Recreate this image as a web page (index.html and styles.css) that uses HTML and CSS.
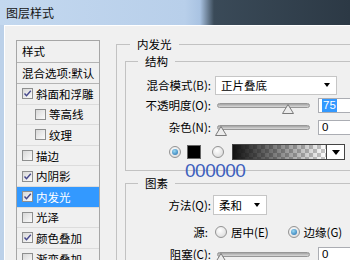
FILE: index.html
```html
<!DOCTYPE html>
<html lang="zh-CN">
<head>
  <meta charset="UTF-8">
  <title>图层样式</title>
  <link rel="stylesheet" href="styles.css">
</head>
<body>
  <div class="titlebar">图层样式</div>

  <div class="dialog">
    <!-- Effects list on the left -->
    <ul class="style-list">
      <li class="head">样式</li>
      <li class="head">混合选项:默认</li>
      <li><span class="check"><svg viewBox="0 0 9 9"><path d="M1.5 4.5l2 2.3L7.8 1.8"/></svg></span>斜面和浮雕</li>
      <li class="sub"><span class="check"></span>等高线</li>
      <li class="sub"><span class="check"></span>纹理</li>
      <li><span class="check"></span>描边</li>
      <li><span class="check"><svg viewBox="0 0 9 9"><path d="M1.5 4.5l2 2.3L7.8 1.8"/></svg></span>内阴影</li>
      <li class="active"><span class="check"><svg viewBox="0 0 9 9"><path d="M1.5 4.5l2 2.3L7.8 1.8"/></svg></span>内发光</li>
      <li><span class="check"></span>光泽</li>
      <li><span class="check"><svg viewBox="0 0 9 9"><path d="M1.5 4.5l2 2.3L7.8 1.8"/></svg></span>颜色叠加</li>
      <li><span class="check"></span>渐变叠加</li>
    </ul>

    <div class="panel">
      <fieldset class="group outer">
        <legend>内发光</legend>

        <fieldset class="group inner structure">
          <legend>结构</legend>
          <div class="row">
            <span class="lbl">混合模式(B):</span>
            <div class="select wide">正片叠底<span class="arrow"></span></div>
          </div>
          <div class="row">
            <span class="lbl">不透明度(O):</span>
            <div class="slider"><span class="thumb" style="left: 64px"><svg viewBox="0 0 12 10"><polygon points="0.5,9.5 6,0.5 11.5,9.5"/></svg></span></div>
            <div class="field"><span class="selected">75</span></div>
          </div>
          <div class="row gap-sm">
            <span class="lbl">杂色(N):</span>
            <div class="slider"><span class="thumb" style="left: -3px"><svg viewBox="0 0 12 10"><polygon points="0.5,9.5 6,0.5 11.5,9.5"/></svg></span></div>
            <div class="field">0</div>
          </div>
          <div class="row color-row">
            <span class="radio on"></span>
            <span class="swatch"></span>
            <span class="radio second"></span>
            <div class="gradient"></div>
            <div class="gradient-drop"><span class="arrow big"></span></div>
          </div>
        </fieldset>

        <fieldset class="group inner elements">
          <legend>图素</legend>
          <div class="row">
            <span class="lbl">方法(Q):</span>
            <div class="select small">柔和<span class="arrow"></span></div>
          </div>
          <div class="row source">
            <span class="lbl">源:</span>
            <span class="radio"></span><span class="opt">居中(E)</span>
            <span class="radio on"></span><span class="opt">边缘(G)</span>
          </div>
          <div class="row gap-sm">
            <span class="lbl">阻塞(C):</span>
            <div class="slider"><span class="thumb" style="left: -3px"><svg viewBox="0 0 12 10"><polygon points="0.5,9.5 6,0.5 11.5,9.5"/></svg></span></div>
            <div class="field">0</div>
          </div>
        </fieldset>
      </fieldset>
    </div>

    <!-- hand-written note over the dialog -->
    <div class="note">000000</div>
  </div>
</body>
</html>
```

FILE: styles.css
```css
/* General */
body {
  margin: 0;
  width: 350px;
  height: 260px;
  overflow: hidden;
  background: #2b3844;
  font-family: "Noto Sans CJK SC", "Noto Sans", sans-serif;
  font-size: 11.5px;
  color: #000;
}

/* Window title */
.titlebar {
  height: 25px;
  line-height: 25px;
  padding-left: 6px;
  font-size: 12px;
  color: #151515;
  background: linear-gradient(90deg, #c3d8ef 0, #b8cfea 185px, #a9c3e2 200px, #3a4a58 214px, #2c3945 100%);
}

.dialog {
  position: relative;
  display: flex;
  height: 235px;
  background: #f0f0f0;
  border-left: 4px solid #bcd1e9;
  box-shadow: inset 1px 1px 0 #fff;
}

/* Style list */
.style-list {
  flex-shrink: 0;
  box-sizing: border-box;
  width: 84px;
  height: 240px;
  margin: 15px 0 0 12px;
  padding: 0;
  list-style: none;
  background: #f0f0f0;
  border: 1px solid #a6a6a6;
}

.style-list li {
  display: flex;
  align-items: center;
  height: 19.6px;
  padding-left: 5px;
  border-bottom: 1px solid #dcdcdc;
  white-space: nowrap;
}

.style-list li.head {
  height: 20.5px;
  border-bottom-color: #b4b4b4;
}

.style-list li.sub {
  padding-left: 18px;
}

.style-list li.active {
  background: #3399ff;
  color: #fff;
}

.check {
  box-sizing: border-box;
  width: 11px;
  height: 11px;
  margin-right: 3px;
  border: 1px solid #8e8f8f;
  background: linear-gradient(135deg, #d8d8d8, #fbfbfb);
  display: flex;
  align-items: center;
  justify-content: center;
}

.check svg {
  width: 9px;
  height: 9px;
  fill: none;
  stroke: #45478c;
  stroke-width: 1.4;
}

/* Right panel */
.panel {
  flex: 1;
  min-width: 0;
  margin: 11px 0 0 16px;
}

.group {
  margin: 0;
  padding: 0;
  border: 1px solid #c2c2c2;
}

.group legend {
  padding: 0 7px;
  line-height: 16px;
}

.outer {
  margin-right: -40px;
  height: 260px;
}

.outer > legend {
  margin-left: 13px;
}

.inner {
  margin: 1px -40px 0 8px;
}

.inner > legend {
  margin-left: 12px;
}

.structure {
  padding: 6px 0 8px;
}

.elements {
  margin-top: 4px;
  padding: 4px 0 10px;
}

.row {
  display: flex;
  align-items: center;
  height: 20px;
  white-space: nowrap;
}

.row.gap-sm {
  margin-top: 2px;
}

.lbl {
  flex-shrink: 0;
  width: 85px;
  text-align: right;
}

/* Drop-down boxes */
.select {
  box-sizing: border-box;
  display: flex;
  align-items: center;
  justify-content: space-between;
  height: 19px;
  margin-left: 4px;
  padding: 0 6px 0 5px;
  background: #fff;
  border: 1px solid #c6c6c6;
}

.select.wide {
  width: 122px;
}

.select.small {
  width: 54px;
  height: 20px;
  margin-left: 2px;
}

.arrow {
  width: 0;
  height: 0;
  border-left: 3.5px solid transparent;
  border-right: 3.5px solid transparent;
  border-top: 4px solid #000;
}

.arrow.big {
  border-left-width: 4.5px;
  border-right-width: 4.5px;
  border-top-width: 5px;
}

/* Sliders */
.slider {
  position: relative;
  box-sizing: border-box;
  width: 93px;
  height: 5px;
  margin-left: 6px;
  border: 1px solid #979797;
  border-radius: 3px;
  background: linear-gradient(#a4a4a4, #dadada);
}

.thumb {
  position: absolute;
  top: 0;
  width: 12px;
  height: 10px;
}

.thumb svg {
  display: block;
  width: 12px;
  height: 10px;
  fill: #ececec;
  stroke: #7a7a7a;
}

.field {
  box-sizing: border-box;
  width: 40px;
  height: 15px;
  margin-left: 8px;
  padding-left: 3px;
  line-height: 13px;
  font-family: "Liberation Sans", Arial, sans-serif;
  font-size: 11.5px;
  background: #fff;
  border: 1px solid #abadb3;
}

.selected {
  display: inline-block;
  padding: 0 1px;
  background: #3399ff;
  color: #fff;
}

/* Radios and colour */
.radio {
  position: relative;
  box-sizing: border-box;
  flex-shrink: 0;
  width: 12px;
  height: 12px;
  border: 1px solid #939393;
  border-radius: 50%;
  background: radial-gradient(circle at 40% 35%, #fff, #d4d4d4);
}

.radio.on::after {
  content: "";
  position: absolute;
  left: 2px;
  top: 2px;
  width: 6px;
  height: 6px;
  border-radius: 50%;
  background: radial-gradient(circle at 40% 35%, #9ad8f2, #1b6aad);
}

.color-row {
  margin-top: 5px;
  padding-left: 43px;
}

.swatch {
  box-sizing: border-box;
  width: 14px;
  height: 14px;
  margin-left: 6px;
  background: #000;
  border: 1px solid #666;
}

.radio.second {
  margin-left: 11px;
}

.gradient {
  box-sizing: border-box;
  width: 95px;
  height: 16px;
  margin-left: 8px;
  border: 1px solid #444;
  background:
    linear-gradient(90deg, #111, rgba(255, 255, 255, 0)),
    repeating-conic-gradient(#c8c8c8 0 25%, #fff 0 50%) 0 0 / 8px 8px;
}

.gradient-drop {
  box-sizing: border-box;
  width: 18px;
  height: 16px;
  display: flex;
  align-items: center;
  justify-content: center;
  background: #fff;
  border: 1px solid #444;
  border-left: none;
}

.source {
  margin-top: 7px;
}

.source .lbl {
  padding-right: 3px;
  box-sizing: border-box;
}

.source .radio {
  margin-left: 4px;
}

.source .radio.on {
  margin-left: 19px;
}

.opt {
  margin-left: 4px;
}

/* Note written over the screenshot */
.note {
  position: absolute;
  left: 181px;
  top: 136px;
  font-family: "Liberation Sans", Arial, sans-serif;
  font-size: 19px;
  line-height: 19px;
  letter-spacing: -0.5px;
  color: #3d5fbd;
}
```
